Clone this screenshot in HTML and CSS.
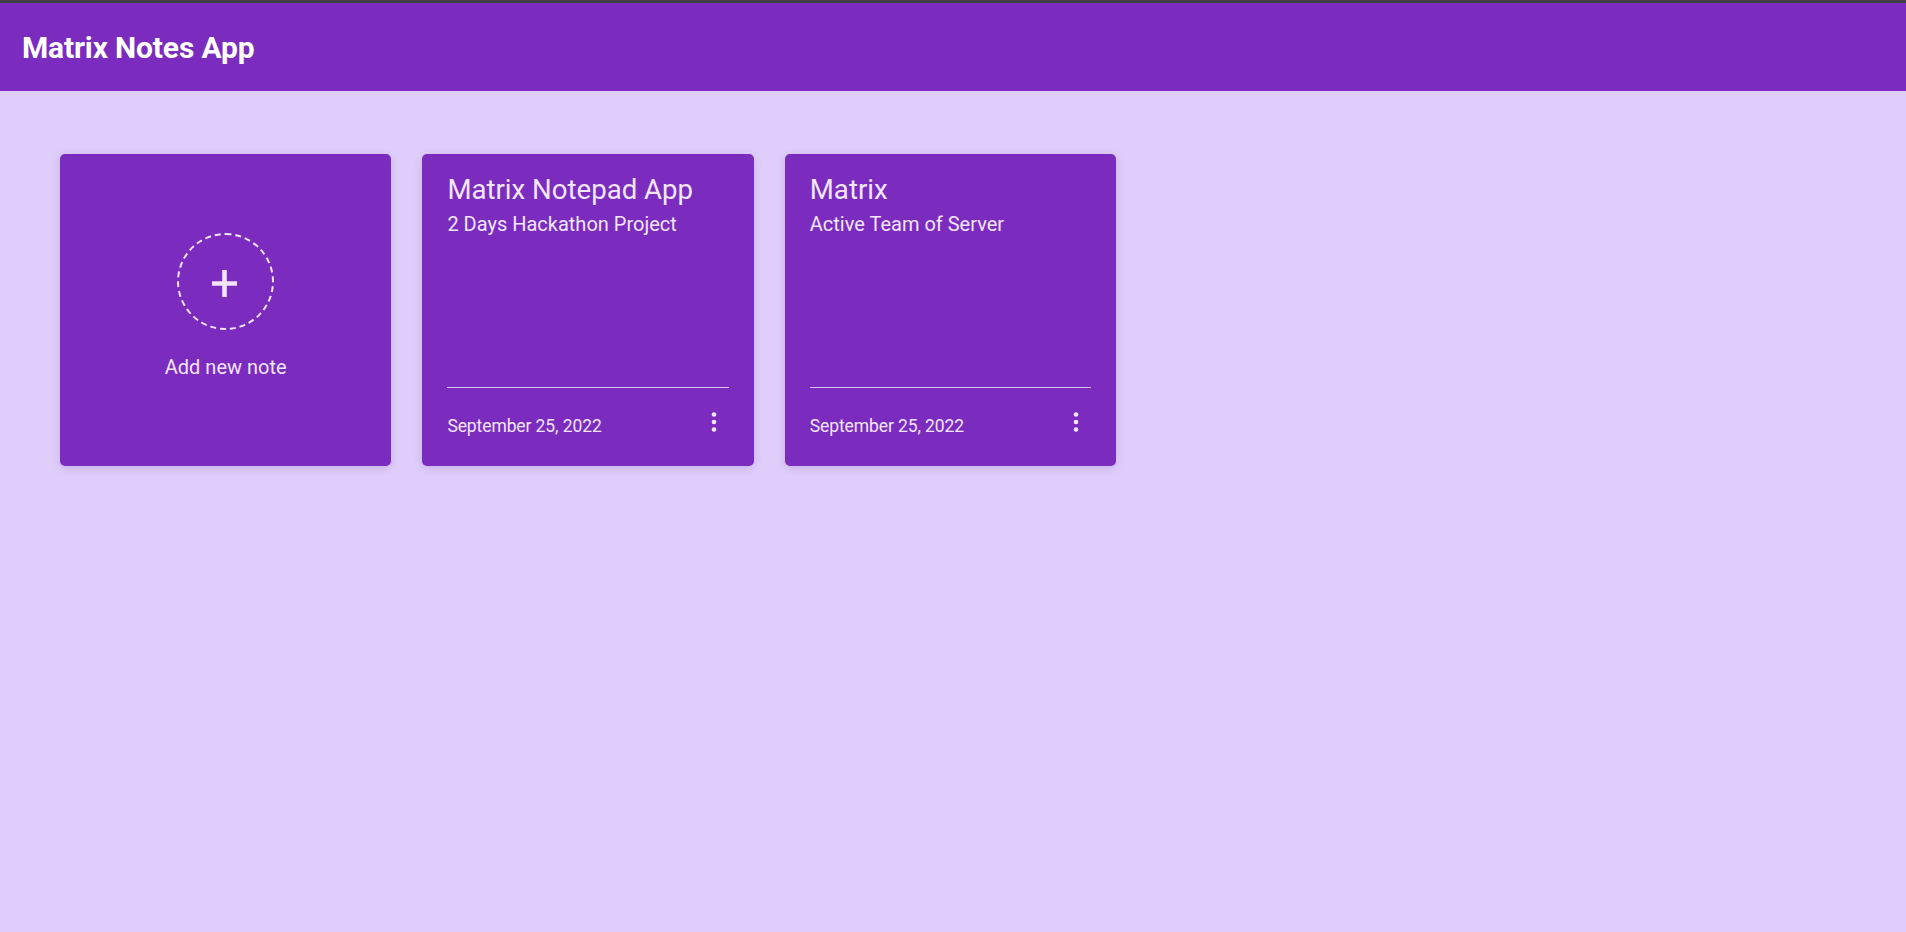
FILE: index.html
```html
<!DOCTYPE html>
<html lang="en">
<head>
<meta charset="utf-8">
<title>Matrix Notes App</title>
<link rel="stylesheet" href="styles.css">
</head>
<body>
<div class="topbar"></div>
<header class="app-header">
  <h1 class="app-title">Matrix Notes App</h1>
</header>
<main class="notes">
  <div class="card add-card">
    <div class="add-circle">
      <svg class="plus" viewBox="0 0 25 27" width="25" height="27"><path d="M12.5 0v27M0 13.5h25" stroke="#f1e4f9" stroke-width="4.6"/></svg>
    </div>
    <div class="add-label">Add new note</div>
  </div>
  <div class="card note-card">
    <div class="note-body">
      <div class="note-title">Matrix Notepad App</div>
      <div class="note-text">2 Days Hackathon Project</div>
    </div>
    <div class="note-divider"></div>
    <div class="note-footer">
      <span class="note-date">September 25, 2022</span>
      <svg class="more" viewBox="0 0 30 30" width="30" height="30"><circle cx="15" cy="7.5" r="2.3"/><circle cx="15" cy="15" r="2.3"/><circle cx="15" cy="22.5" r="2.3"/></svg>
    </div>
  </div>
  <div class="card note-card">
    <div class="note-body">
      <div class="note-title">Matrix</div>
      <div class="note-text">Active Team of Server</div>
    </div>
    <div class="note-divider"></div>
    <div class="note-footer">
      <span class="note-date">September 25, 2022</span>
      <svg class="more" viewBox="0 0 30 30" width="30" height="30"><circle cx="15" cy="7.5" r="2.3"/><circle cx="15" cy="15" r="2.3"/><circle cx="15" cy="22.5" r="2.3"/></svg>
    </div>
  </div>
</main>
</body>
</html>
```

FILE: styles.css
```css
* { box-sizing: border-box; }
html, body { height: 100%; }
body {
  margin: 0;
  background: #dfcefb;
  font-family: Roboto, "Liberation Sans", Arial, sans-serif;
  color: #f1e6fb;
}
.topbar {
  height: 3px;
  background: #3f3f3f;
}
.app-header {
  height: 88px;
  background: #7b2bbe;
  display: flex;
  align-items: center;
  padding-left: 22px;
}
.app-title {
  margin: 0;
  font-size: 30px;
  font-weight: 700;
  color: #ffffff;
  letter-spacing: -0.15px;
}
.notes {
  display: flex;
  gap: 31px;
  padding: 63px 0 0 60px;
}
.card {
  width: 331.4px;
  height: 312px;
  background: #7b2bbe;
  border-radius: 5px;
  box-shadow: 0 2px 8px rgba(90, 40, 150, 0.18);
}
.add-card {
  display: flex;
  flex-direction: column;
  align-items: center;
  padding-top: 79px;
}
.add-circle {
  width: 97px;
  height: 97px;
  border: 2px dashed #f1e6fb;
  border-radius: 50%;
  display: flex;
  align-items: center;
  justify-content: center;
}
.plus { margin: 3px 3px 0 0; }
.add-label {
  margin-top: 26px;
  font-size: 20px;
  line-height: 23px;
}
.note-card {
  display: flex;
  flex-direction: column;
  padding: 19px 25px 29px;
}
.note-body { flex: 1; }
.note-title {
  font-size: 27.6px;
  line-height: 33px;
}
.note-text {
  margin-top: 7px;
  font-size: 20px;
  line-height: 23px;
}
.note-divider {
  height: 1px;
  background: #d9c3f2;
}
.note-footer {
  margin-top: 19px;
  height: 30px;
  display: flex;
  align-items: flex-end;
  justify-content: space-between;
}
.note-date {
  font-size: 17.5px;
  line-height: 20px;
  letter-spacing: -0.1px;
  margin-bottom: 1px;
}
.more { fill: #f1e6fb; align-self: center; }
```
